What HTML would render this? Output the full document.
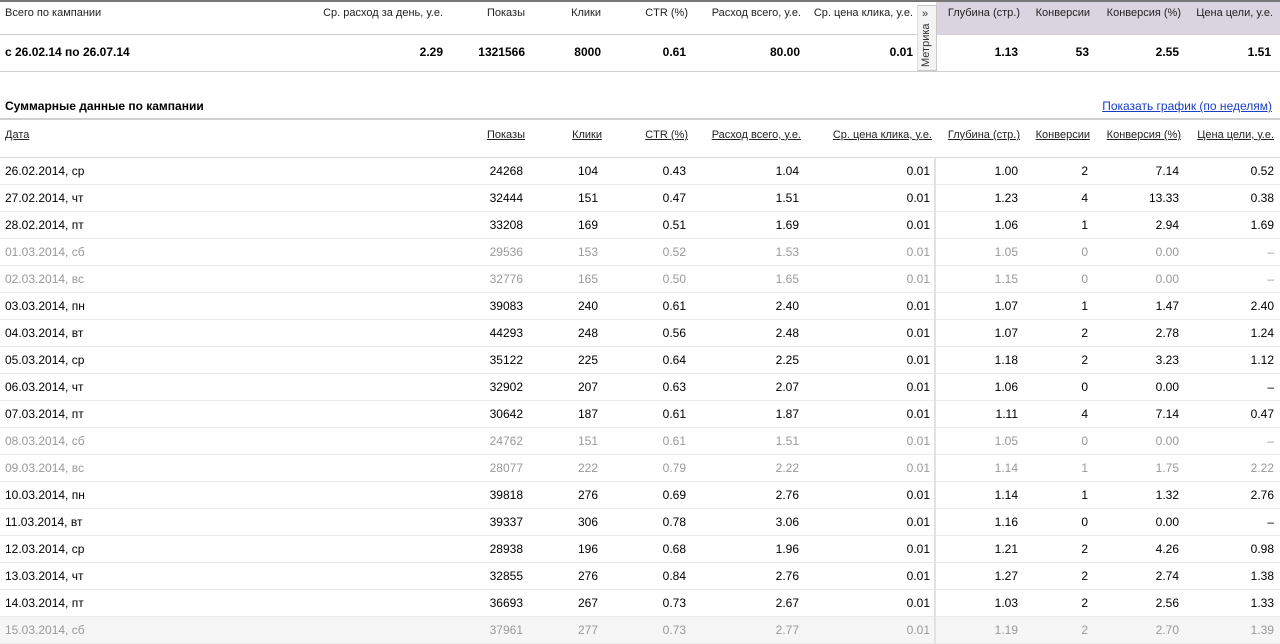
<!DOCTYPE html>
<html><head><meta charset="utf-8"><style>
*{margin:0;padding:0;box-sizing:border-box}
body{width:1280px;height:641px;overflow:hidden;background:#fff;font-family:"Liberation Sans",Arial,sans-serif;color:#000;position:relative}
.a{position:absolute;white-space:nowrap}
.r{text-align:right}
.h{font-size:11px;color:#222}
.b{font-size:12px;font-weight:bold}
table{position:absolute;left:0;top:118px;width:1280px;border-collapse:collapse;table-layout:fixed}
th{font-size:11px;font-weight:normal;color:#222;text-decoration:underline;height:38px;text-align:right;padding-right:2px;border-bottom:1px solid #d6d6d6;border-top:2px solid #d0d0d0;vertical-align:middle;padding-bottom:7px}
th:first-child{text-align:left;padding-left:5px}
td{font-size:12px;height:27px;text-align:right;padding-right:6px;border-bottom:1px solid #ebebeb}
td:first-child{text-align:left;padding-left:5px}
td:nth-child(6){border-right:2px solid #e2e2e2;padding-right:4px}
tr.g td{color:#999}
tr.l td{background:#f6f6f6}
</style></head><body>
<div class="a" style="left:0;top:0;width:1280px;height:2px;background:#777"></div>
<div class="a" style="left:936px;top:2px;width:344px;height:32px;background:#d9d4df"></div>
<div class="a" style="left:0;top:34px;width:1280px;height:1px;background:#d0d0d0"></div>
<div class="a" style="left:0;top:71px;width:1280px;height:1px;background:#d0d0d0"></div>
<div class="a h" style="left:5px;top:7px">Всего по кампании</div>
<div class="a h r" style="right:837px;top:7px">Ср. расход за день, у.е.</div>
<div class="a h r" style="right:755px;top:7px">Показы</div>
<div class="a h r" style="right:679px;top:7px">Клики</div>
<div class="a h r" style="right:592px;top:7px">CTR (%)</div>
<div class="a h r" style="right:479px;top:7px">Расход всего, у.е.</div>
<div class="a h r" style="right:367px;top:7px">Ср. цена клика, у.е.</div>
<div class="a h r" style="right:260px;top:7px">Глубина (стр.)</div>
<div class="a h r" style="right:190px;top:7px">Конверсии</div>
<div class="a h r" style="right:99px;top:7px">Конверсия (%)</div>
<div class="a h r" style="right:7px;top:7px">Цена цели, у.е.</div>
<div class="a b" style="left:5px;top:45px">с 26.02.14 по 26.07.14</div>
<div class="a b r" style="right:837px;top:45px">2.29</div>
<div class="a b r" style="right:755px;top:45px">1321566</div>
<div class="a b r" style="right:679px;top:45px">8000</div>
<div class="a b r" style="right:594px;top:45px">0.61</div>
<div class="a b r" style="right:480px;top:45px">80.00</div>
<div class="a b r" style="right:367px;top:45px">0.01</div>
<div class="a b r" style="right:262px;top:45px">1.13</div>
<div class="a b r" style="right:191px;top:45px">53</div>
<div class="a b r" style="right:101px;top:45px">2.55</div>
<div class="a b r" style="right:9px;top:45px">1.51</div>
<div class="a" style="left:917px;top:5px;width:20px;height:66px;background:#f3f3f3;border:1px solid #c8c8c8;border-left-color:#ddd"></div>
<div class="a" style="left:922px;top:8px;font-size:11px;color:#333">»</div>
<div class="a" style="left:920px;top:67px;font-size:11px;color:#333;transform:rotate(-90deg);transform-origin:0 0;">Метрика</div>
<div class="a b" style="left:5px;top:99px">Суммарные данные по кампании</div>
<div class="a r" style="right:8px;top:99px;font-size:12px;color:#1a3dc1;text-decoration:underline">Показать график (по неделям)</div>
<table>
<colgroup><col style="width:300px"><col style="width:229px"><col style="width:75px"><col style="width:88px"><col style="width:113px"><col style="width:130px"><col style="width:89px"><col style="width:70px"><col style="width:91px"><col style="width:95px"></colgroup>
<tr><th>Дата</th><th style="padding-right:4px">Показы</th><th>Клики</th><th style="padding-right:4px">CTR (%)</th><th style="padding-right:4px">Расход всего, у.е.</th><th style="padding-right:3px">Ср. цена клика, у.е.</th><th style="padding-right:4px">Глубина (стр.)</th><th style="padding-right:4px">Конверсии</th><th style="padding-right:4px">Конверсия (%)</th><th style="padding-right:6px">Цена цели, у.е.</th></tr>
<tr><td>26.02.2014, ср</td><td>24268</td><td>104</td><td>0.43</td><td>1.04</td><td>0.01</td><td>1.00</td><td>2</td><td>7.14</td><td>0.52</td></tr>
<tr><td>27.02.2014, чт</td><td>32444</td><td>151</td><td>0.47</td><td>1.51</td><td>0.01</td><td>1.23</td><td>4</td><td>13.33</td><td>0.38</td></tr>
<tr><td>28.02.2014, пт</td><td>33208</td><td>169</td><td>0.51</td><td>1.69</td><td>0.01</td><td>1.06</td><td>1</td><td>2.94</td><td>1.69</td></tr>
<tr class="g"><td>01.03.2014, сб</td><td>29536</td><td>153</td><td>0.52</td><td>1.53</td><td>0.01</td><td>1.05</td><td>0</td><td>0.00</td><td>–</td></tr>
<tr class="g"><td>02.03.2014, вс</td><td>32776</td><td>165</td><td>0.50</td><td>1.65</td><td>0.01</td><td>1.15</td><td>0</td><td>0.00</td><td>–</td></tr>
<tr><td>03.03.2014, пн</td><td>39083</td><td>240</td><td>0.61</td><td>2.40</td><td>0.01</td><td>1.07</td><td>1</td><td>1.47</td><td>2.40</td></tr>
<tr><td>04.03.2014, вт</td><td>44293</td><td>248</td><td>0.56</td><td>2.48</td><td>0.01</td><td>1.07</td><td>2</td><td>2.78</td><td>1.24</td></tr>
<tr><td>05.03.2014, ср</td><td>35122</td><td>225</td><td>0.64</td><td>2.25</td><td>0.01</td><td>1.18</td><td>2</td><td>3.23</td><td>1.12</td></tr>
<tr><td>06.03.2014, чт</td><td>32902</td><td>207</td><td>0.63</td><td>2.07</td><td>0.01</td><td>1.06</td><td>0</td><td>0.00</td><td>–</td></tr>
<tr><td>07.03.2014, пт</td><td>30642</td><td>187</td><td>0.61</td><td>1.87</td><td>0.01</td><td>1.11</td><td>4</td><td>7.14</td><td>0.47</td></tr>
<tr class="g"><td>08.03.2014, сб</td><td>24762</td><td>151</td><td>0.61</td><td>1.51</td><td>0.01</td><td>1.05</td><td>0</td><td>0.00</td><td>–</td></tr>
<tr class="g"><td>09.03.2014, вс</td><td>28077</td><td>222</td><td>0.79</td><td>2.22</td><td>0.01</td><td>1.14</td><td>1</td><td>1.75</td><td>2.22</td></tr>
<tr><td>10.03.2014, пн</td><td>39818</td><td>276</td><td>0.69</td><td>2.76</td><td>0.01</td><td>1.14</td><td>1</td><td>1.32</td><td>2.76</td></tr>
<tr><td>11.03.2014, вт</td><td>39337</td><td>306</td><td>0.78</td><td>3.06</td><td>0.01</td><td>1.16</td><td>0</td><td>0.00</td><td>–</td></tr>
<tr><td>12.03.2014, ср</td><td>28938</td><td>196</td><td>0.68</td><td>1.96</td><td>0.01</td><td>1.21</td><td>2</td><td>4.26</td><td>0.98</td></tr>
<tr><td>13.03.2014, чт</td><td>32855</td><td>276</td><td>0.84</td><td>2.76</td><td>0.01</td><td>1.27</td><td>2</td><td>2.74</td><td>1.38</td></tr>
<tr><td>14.03.2014, пт</td><td>36693</td><td>267</td><td>0.73</td><td>2.67</td><td>0.01</td><td>1.03</td><td>2</td><td>2.56</td><td>1.33</td></tr>
<tr class="g l"><td>15.03.2014, сб</td><td>37961</td><td>277</td><td>0.73</td><td>2.77</td><td>0.01</td><td>1.19</td><td>2</td><td>2.70</td><td>1.39</td></tr>
</table>
</body></html>
